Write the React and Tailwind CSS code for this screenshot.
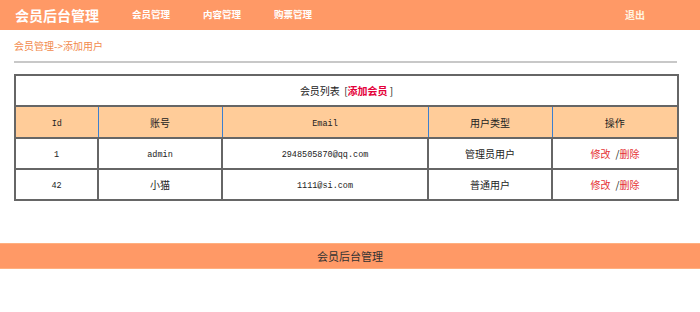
import React from "react";

const cjk = "font-['Noto_Sans_CJK_SC',sans-serif]";
const mono = "font-['Liberation_Mono','Noto_Sans_CJK_SC',monospace]";

const members = [
  { id: 1, account: "admin", email: "2948505870@qq.com", type: "管理员用户" },
  { id: 42, account: "小猫", email: "1111@si.com", type: "普通用户" },
];

const App = () => {
  return (
    <div className={`w-[700px] h-[312px] bg-white ${cjk}`}>
      {/* top bar */}
      <div className="h-[30px] bg-[#ff9966] flex items-center text-white">
        <div className="ml-[15px] text-[14px] font-bold leading-none">会员后台管理</div>
        <div className="ml-[33px] flex gap-[33px] text-[9.5px] font-bold leading-none">
          <span>会员管理</span>
          <span>内容管理</span>
          <span>购票管理</span>
        </div>
        <div className="ml-auto mr-[55px] text-[10px] font-bold leading-none text-[#fff5e0]">退出</div>
      </div>

      <div className="ml-[14px] w-[663px]">
        <div className="h-[31px] flex items-center text-[10px] text-[#f28a4c]">会员管理-&gt;添加用户</div>
        <div className="border-t-2 border-[#c8c8c8]"></div>

        <table className="mt-[11px] w-[663px] border-collapse table-fixed text-[10px] text-[#222]">
          <colgroup>
            <col className="w-[83px]" />
            <col className="w-[124px]" />
            <col className="w-[206px]" />
            <col className="w-[124px]" />
            <col className="w-[126px]" />
          </colgroup>
          <tbody>
            <tr>
              <td colSpan={5} className="h-[31px] border-2 border-[#666] text-center">
                会员列表 <span className="ml-[2px]">[</span><span className="text-[#e4003a] font-bold">添加会员</span> ]
              </td>
            </tr>
            <tr className="bg-[#ffcc99]">
              <th className={`h-[32px] pt-[4px] font-normal border-y-2 border-l-2 border-r border-y-[#666] border-l-[#666] border-r-[#3c7fd0] ${mono} text-[8.5px]`}>Id</th>
              <th className="font-normal border-y-2 border-x border-y-[#666] border-x-[#3c7fd0]">账号</th>
              <th className={`pt-[4px] font-normal border-y-2 border-x border-y-[#666] border-x-[#3c7fd0] ${mono} text-[8.5px]`}>Email</th>
              <th className="font-normal border-y-2 border-x border-y-[#666] border-x-[#3c7fd0]">用户类型</th>
              <th className="font-normal border-y-2 border-l border-r-2 border-y-[#666] border-l-[#3c7fd0] border-r-[#666]">操作</th>
            </tr>
            {members.map((m) => (
              <tr key={m.id}>
                <td className={`h-[31px] pt-[4px] border-2 border-[#666] text-center ${mono} text-[8.5px]`}>{m.id}</td>
                {m.account === "小猫" ? (
                  <td className="border-2 border-[#666] text-center">{m.account}</td>
                ) : (
                  <td className={`pt-[4px] border-2 border-[#666] text-center ${mono} text-[8.5px]`}>{m.account}</td>
                )}
                <td className={`pt-[4px] border-2 border-[#666] text-center ${mono} text-[8.5px]`}>{m.email}</td>
                <td className="border-2 border-[#666] text-center">{m.type}</td>
                <td className="border-2 border-[#666] text-center">
                  <span className="text-[#e53333]">修改</span>
                  <span className="ml-[5px]">/</span>
                  <span className="text-[#e53333]">删除</span>
                </td>
              </tr>
            ))}
          </tbody>
        </table>
      </div>

      {/* footer */}
      <div className="mt-[42px] h-[26px] bg-[#ff9966] border-y border-[#ffb080] flex items-center justify-center text-[11px] text-[#333]">
        会员后台管理
      </div>
    </div>
  );
};

export default App;
